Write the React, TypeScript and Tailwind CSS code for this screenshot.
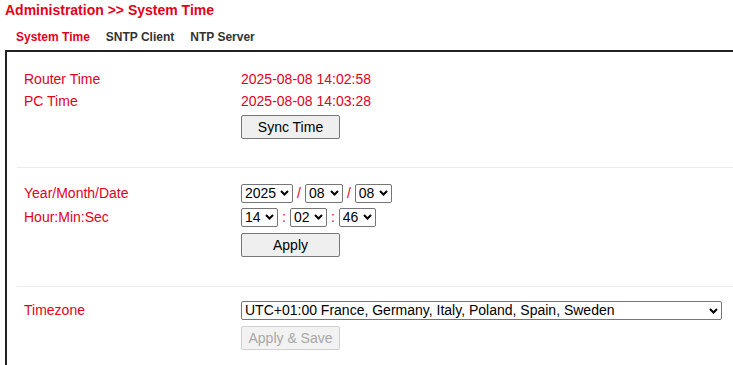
const RED = "text-[#e3001b]";

function Chevron() {
  return (
    <svg
      width="9"
      height="6"
      viewBox="0 0 9 6"
      className="pointer-events-none absolute right-[4px] top-1/2 -translate-y-1/2"
    >
      <path d="M1 1l3.5 3.5L8 1" fill="none" stroke="#000" strokeWidth="2" />
    </svg>
  );
}

function Select({ value, width }: { value: string; width: string }) {
  return (
    <span className="relative inline-block align-middle">
      <select
        defaultValue={value}
        className={`${width} h-[19px] appearance-none rounded-[2px] border border-[#767676] bg-white pl-[3px] text-[14px] leading-[17px] text-black`}
      >
        <option>{value}</option>
      </select>
      <Chevron />
    </span>
  );
}

function Button({ label, disabled }: { label: string; disabled?: boolean }) {
  return (
    <button
      disabled={disabled}
      className={
        disabled
          ? "h-[24px] w-[99px] rounded-[2px] border border-[#d0d0d0] bg-[#f2f2f2] text-[14px] text-[#a8a8a8]"
          : "h-[24px] w-[99px] rounded-[2px] border border-[#767676] bg-[#efefef] text-[14px] text-black"
      }
    >
      {label}
    </button>
  );
}

function Row({ label, children, h }: { label?: string; children: React.ReactNode; h: string }) {
  return (
    <div className={`flex items-center ${h}`}>
      <div className={`w-[217px] shrink-0 ${RED}`}>{label}</div>
      <div className={`flex items-center ${RED}`}>{children}</div>
    </div>
  );
}

export default function App() {
  return (
    <div className="h-[365px] w-[733px] overflow-hidden bg-white font-['Liberation_Sans',Arial,sans-serif]">
      <div className={`pl-[5px] pt-[2px] text-[14px] font-bold leading-[16px] ${RED}`}>
        Administration &gt;&gt; System Time
      </div>

      <div className="mt-[12px] flex gap-[16px] pl-[16px] text-[12px] font-bold leading-[14px] text-[#333]">
        <span className={RED}>System Time</span>
        <span>SNTP Client</span>
        <span>NTP Server</span>
      </div>

      <div className="ml-[5px] mt-[6px] w-[800px] border-l-2 border-t-2 border-[#222] pl-[10px] text-[14px]">
        <section className="px-[7px] pb-[28px] pt-[16px]">
          <Row label="Router Time" h="h-[22px]">2025-08-08 14:02:58</Row>
          <Row label="PC Time" h="h-[22px]">2025-08-08 14:03:28</Row>
          <div className="mt-[3px] pl-[217px]">
            <Button label="Sync Time" />
          </div>
        </section>

        <section className="border-t border-[#ececec] px-[7px] pb-[29px] pt-[13px]">
          <Row label="Year/Month/Date" h="h-[24px]">
            <Select value="2025" width="w-[52px]" />
            <span className="px-[4px]">/</span>
            <Select value="08" width="w-[38px]" />
            <span className="px-[4px]">/</span>
            <Select value="08" width="w-[37px]" />
          </Row>
          <Row label="Hour:Min:Sec" h="h-[24px]">
            <Select value="14" width="w-[37px]" />
            <span className="px-[4px]">:</span>
            <Select value="02" width="w-[37px]" />
            <span className="px-[4px]">:</span>
            <Select value="46" width="w-[37px]" />
          </Row>
          <div className="mt-[4px] pl-[217px]">
            <Button label="Apply" />
          </div>
        </section>

        <section className="border-t border-[#ececec] px-[7px] pb-[20px] pt-[11px]">
          <Row label="Timezone" h="h-[25px]">
            <Select value="UTC+01:00 France, Germany, Italy, Poland, Spain, Sweden" width="w-[481px]" />
          </Row>
          <div className="mt-[3px] pl-[217px]">
            <Button label="Apply & Save" disabled />
          </div>
        </section>
      </div>
    </div>
  );
}
